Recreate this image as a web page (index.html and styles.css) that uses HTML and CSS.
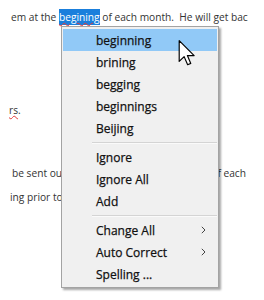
FILE: index.html
```html
<!DOCTYPE html>
<html lang="en">
<head>
  <meta charset="UTF-8">
  <title>Spelling menu</title>
  <link rel="stylesheet" href="styles.css">
</head>
<body>
  <div class="doc">
    <p class="line line-1">em at the <span class="sel">begining</span> of each month.&nbsp; He will get back to you</p>
    <p class="line line-2"><span class="typo">rs</span>.</p>
    <p class="line line-3"><span>be sent out to</span><span>of each</span></p>
    <p class="line line-4">ing prior to</p>
  </div>

  <ul class="menu">
    <li class="item active">beginning</li>
    <li class="item">brining</li>
    <li class="item">begging</li>
    <li class="item">beginnings</li>
    <li class="item">Beijing</li>
    <li class="sep"></li>
    <li class="item">Ignore</li>
    <li class="item">Ignore All</li>
    <li class="item">Add</li>
    <li class="sep"></li>
    <li class="item">Change All
      <svg class="chev" width="5" height="8" viewBox="0 0 5 8"><path d="M0.8 0.8 L4 4 L0.8 7.2" fill="none" stroke="#444" stroke-width="1"/></svg>
    </li>
    <li class="item">Auto Correct
      <svg class="chev" width="5" height="8" viewBox="0 0 5 8"><path d="M0.8 0.8 L4 4 L0.8 7.2" fill="none" stroke="#444" stroke-width="1"/></svg>
    </li>
    <li class="item">Spelling ...</li>
  </ul>

  <svg class="cursor" width="18" height="26" viewBox="0 0 13 20">
    <path d="M0.5 0.5 V16.5 L4.3 12.8 L7 19 L9.4 18 L6.8 12 H12 Z" fill="#fff" stroke="#000" stroke-width="0.9" stroke-linejoin="round"/>
  </svg>
</body>
</html>
```

FILE: styles.css
```css
body {
  margin: 0;
  background: #fff;
  font-family: "Open Sans", "Noto Sans", sans-serif;
}
.doc {
  width: 248px;
  overflow: hidden;
  padding-top: 10px;
}
.line {
  margin: 0;
  height: 14px;
  line-height: 14px;
  font-size: 10.2px;
  color: #333;
  white-space: nowrap;
}
.line-1 {
  padding-left: 11px;
}
.line-2 {
  margin-top: 79px;
  padding-left: 9px;
}
.line-3 {
  margin-top: 49px;
  padding-left: 12px;
  display: flex;
  justify-content: space-between;
  padding-right: 2px;
}
.line-4 {
  margin-top: 10px;
  padding-left: 10px;
}
.sel {
  background: #1a7fdc;
  color: #fff;
  padding: 1px 0;
  text-decoration: underline wavy #e23a3a;
  text-decoration-thickness: 1px;
}
.typo {
  text-decoration: underline wavy #e23a3a;
  text-decoration-thickness: 1px;
}

.menu {
  position: absolute;
  left: 61px;
  top: 26px;
  width: 158px;
  box-sizing: border-box;
  margin: 0;
  padding: 2px 1px;
  list-style: none;
  background: #f0f0f0;
  border: 1px solid #a3a3a3;
  box-shadow: 2px 2px 2px rgba(0, 0, 0, 0.35);
}
.item {
  display: flex;
  align-items: center;
  justify-content: space-between;
  height: 22px;
  padding: 0 11px 0 33px;
  font-size: 12px;
  font-weight: 500;
  color: #111;
  -webkit-text-stroke: 0.25px #111;
}
.item.active {
  background: #91c9f7;
}
.sep {
  height: 7px;
  margin-left: 29px;
  display: flex;
  align-items: center;
}
.sep::before {
  content: "";
  flex: 1;
  height: 1px;
  background: #d4d4d4;
  border-bottom: 1px solid #fafafa;
}
.cursor {
  position: absolute;
  left: 178px;
  top: 40px;
}
```
